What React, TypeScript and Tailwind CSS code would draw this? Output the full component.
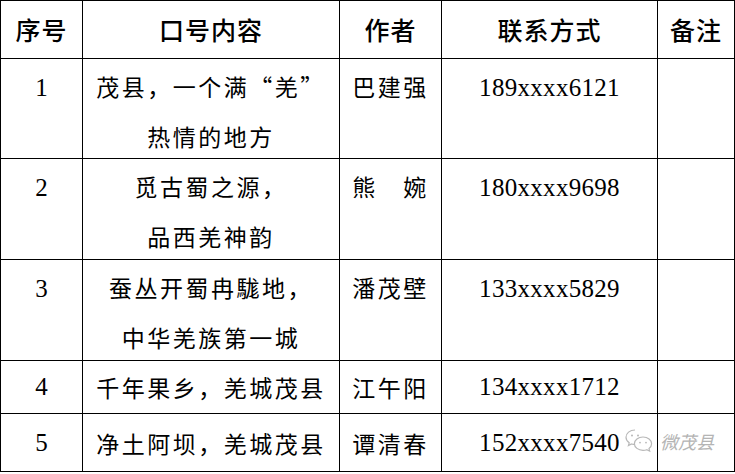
import React from "react";

type Row = {
  no: string;
  slogan: string[];
  author: string;
  phone: string;
  h: string;
  center?: boolean;
};

const rows: Row[] = [
  { no: "1", slogan: ["茂县，一个满“羌”", "热情的地方"], author: "巴建强", phone: "189xxxx6121", h: "h-[100px]" },
  { no: "2", slogan: ["觅古蜀之源，", "品西羌神韵"], author: "熊　婉", phone: "180xxxx9698", h: "h-[101px]" },
  { no: "3", slogan: ["蚕丛开蜀冉駹地，", "中华羌族第一城"], author: "潘茂壁", phone: "133xxxx5829", h: "h-[101px]" },
  { no: "4", slogan: ["千年果乡，羌城茂县"], author: "江午阳", phone: "134xxxx1712", h: "h-[53px]", center: true },
  { no: "5", slogan: ["净土阿坝，羌城茂县"], author: "谭清春", phone: "152xxxx7540", h: "h-[58px]", center: true },
];

const cjk = "font-['Noto_Sans_CJK_SC',sans-serif]";
const serif = "font-['Liberation_Serif','Noto_Sans_CJK_SC',serif]";

function WeChatMark() {
  return (
    <div className="pointer-events-none absolute left-[624px] top-[427px] flex items-center gap-[6px]">
      <svg width="30" height="28" viewBox="0 0 30 28" fill="none" stroke="#b8b8b8" strokeWidth="1.2">
        <path d="M11 3C5.8 3 2 6.3 2 10.3c0 2.3 1.2 4.2 3.2 5.5L4.4 18.6l3.1-1.6c1.1.3 2.2.5 3.5.5" />
        <circle cx="8" cy="8.6" r="1" fill="#b8b8b8" stroke="none" />
        <circle cx="14" cy="8.6" r="1" fill="#b8b8b8" stroke="none" />
        <path d="M19 10c4.8 0 8.6 3 8.6 6.8 0 1.9-1 3.6-2.6 4.8l.7 2.6-2.9-1.5c-1.2.4-2.5.6-3.8.6-4.8 0-8.6-3-8.6-6.6S14.2 10 19 10z" />
        <circle cx="16" cy="15.6" r="0.9" fill="#b8b8b8" stroke="none" />
        <circle cx="22" cy="15.6" r="0.9" fill="#b8b8b8" stroke="none" />
      </svg>
      <span className={`${cjk} text-[18px] italic leading-none text-[#b4b4b4]`}>微茂县</span>
    </div>
  );
}

export default function App() {
  return (
    <div className="relative h-[474px] w-[735px] bg-white text-black">
      <div className="grid w-[735px] grid-cols-[83px_257px_102px_216px_77px] border-t border-black">
        {["序号", "口号内容", "作者", "联系方式", "备注"].map((t, i) => (
          <div
            key={t}
            className={`flex h-[58px] items-center justify-center border-b border-r border-black ${i === 0 ? "border-l" : ""} ${cjk} text-[25px] font-medium tracking-[1px]`}
          >
            {t}
          </div>
        ))}
        {rows.map((r) => (
          <React.Fragment key={r.no}>
            <div
              className={`flex ${r.h} ${r.center ? "items-center" : "items-start pt-[4px]"} justify-center border-b border-l border-r border-black ${serif} text-[25px] leading-[50px]`}
            >
              {r.no}
            </div>
            <div
              className={`flex ${r.h} flex-col ${r.center ? "justify-center" : "justify-start pt-[2px]"} items-center border-b border-r border-black ${cjk} text-[23px] leading-[50px] tracking-[2.5px] [font-feature-settings:'fwid']`}
            >
              {r.slogan.map((s) => (
                <span key={s} className="whitespace-nowrap">
                  {s}
                </span>
              ))}
            </div>
            <div
              className={`flex ${r.h} ${r.center ? "items-center" : "items-start pt-[2px]"} justify-center border-b border-r border-black ${cjk} text-[23px] leading-[50px] tracking-[2.5px]`}
            >
              {r.author}
            </div>
            <div
              className={`flex ${r.h} ${r.center ? "items-center" : "items-start pt-[4px]"} justify-center border-b border-r border-black ${serif} text-[25px] leading-[50px] tracking-[0.3px]`}
            >
              {r.phone}
            </div>
            <div className={`${r.h} border-b border-r border-black`} />
          </React.Fragment>
        ))}
      </div>
      <WeChatMark />
    </div>
  );
}
